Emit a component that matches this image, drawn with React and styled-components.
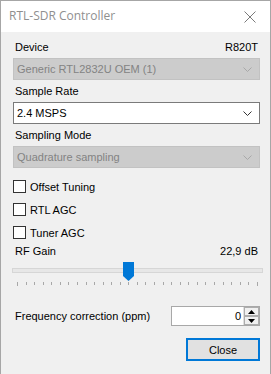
import styled, { createGlobalStyle } from 'styled-components';

const GlobalStyle = createGlobalStyle`
  html, body {
    margin: 0;
    padding: 0;
    background: #f0f0f0;
  }
  body {
    font-family: "Liberation Sans", Arial, sans-serif;
    font-size: 11px;
    color: #000;
  }
`;

const TICKS = 29;
const GAIN_INDEX = 13;

const Chevron = ({ color }) => (
  <svg width="9" height="5" viewBox="0 0 9 5">
    <path d="M0.5 0.5 L4.5 4.5 L8.5 0.5" fill="none" stroke={color} strokeWidth="1" />
  </svg>
);

const App = () => {
  return (
    <>
      <GlobalStyle />
      <Window>
        <TitleBar>
          <Title>RTL-SDR Controller</Title>
          <CloseX width="12" height="12" viewBox="0 0 12 12">
            <path d="M0.5 0.5 L11.5 11.5 M11.5 0.5 L0.5 11.5" stroke="#7a7a7a" strokeWidth="1" />
          </CloseX>
        </TitleBar>
        <Body>
          <Row>
            <span>Device</span>
            <span>R820T</span>
          </Row>
          <Combo disabled>
            <span>Generic RTL2832U OEM (1)</span>
            <Chevron color="#a8a8a8" />
          </Combo>
          <Row $top={5}>
            <span>Sample Rate</span>
          </Row>
          <Combo>
            <span>2.4 MSPS</span>
            <Chevron color="#333" />
          </Combo>
          <Row $top={5}>
            <span>Sampling Mode</span>
          </Row>
          <Combo disabled>
            <span>Quadrature sampling</span>
            <Chevron color="#a8a8a8" />
          </Combo>
          <Checks>
            <Check>
              <Box />
              <span>Offset Tuning</span>
            </Check>
            <Check>
              <Box />
              <span>RTL AGC</span>
            </Check>
            <Check>
              <Box />
              <span>Tuner AGC</span>
            </Check>
          </Checks>
          <Row $top={6}>
            <span>RF Gain</span>
            <span>22,9 dB</span>
          </Row>
          <Slider>
            <Track />
            <Thumb
              width="11"
              height="19"
              viewBox="0 0 11 19"
              style={{ left: `${Math.round(4 + (GAIN_INDEX / (TICKS - 1)) * 240 - 5)}px` }}
            >
              <path d="M0 0 H11 V14 L5.5 19 L0 14 Z" fill="#0078d7" />
            </Thumb>
            <Ticks>
              {Array.from({ length: TICKS }).map((_, i) => (
                <Tick key={i} $long={i === 0 || i === TICKS - 1} />
              ))}
            </Ticks>
          </Slider>
          <FreqRow>
            <span>Frequency correction (ppm)</span>
            <Spin>
              <SpinValue>0</SpinValue>
              <SpinButtons>
                <SpinBtn>
                  <svg width="7" height="4" viewBox="0 0 7 4">
                    <path d="M0 4 L3.5 0 L7 4 Z" fill="#000" />
                  </svg>
                </SpinBtn>
                <SpinBtn>
                  <svg width="7" height="4" viewBox="0 0 7 4">
                    <path d="M0 0 L3.5 4 L7 0 Z" fill="#000" />
                  </svg>
                </SpinBtn>
              </SpinButtons>
            </Spin>
          </FreqRow>
          <Footer>
            <Button>Close</Button>
          </Footer>
        </Body>
      </Window>
    </>
  );
};

const Window = styled.div`
  width: 271px;
  height: 374px;
  box-sizing: border-box;
  border: 1px solid #a6a6a6;
  border-bottom: none;
  background: #f0f0f0;
  display: flex;
  flex-direction: column;
`;

const TitleBar = styled.div`
  height: 31px;
  background: #fff;
  display: flex;
  align-items: center;
  justify-content: space-between;
  padding: 0 14px 0 8px;
  flex-shrink: 0;
`;

const Title = styled.span`
  font-family: "Open Sans", "Liberation Sans", sans-serif;
  font-size: 12px;
  color: #8f8f8f;
  margin-top: -2px;
`;

const CloseX = styled.svg`
  display: block;
`;

const Body = styled.div`
  display: flex;
  flex-direction: column;
  padding: 9px 10px 0 12px;
`;

const Row = styled.div`
  display: flex;
  justify-content: space-between;
  height: 13px;
  line-height: 13px;
  padding: 0 2px;
  margin-top: ${(p) => p.$top || 0}px;
  margin-bottom: 4px;
`;

const Combo = styled.div`
  height: 22px;
  box-sizing: border-box;
  display: flex;
  align-items: center;
  justify-content: space-between;
  padding: 0 7px 0 3px;
  border: 1px solid ${(p) => (p.disabled ? '#c2c2c2' : '#7a7a7a')};
  background: ${(p) => (p.disabled ? '#cccccc' : '#fff')};
  color: ${(p) => (p.disabled ? '#838383' : '#000')};
  svg {
    display: block;
  }
`;

const Checks = styled.div`
  display: flex;
  flex-direction: column;
  gap: 10px;
  margin-top: 12px;
`;

const Check = styled.label`
  display: flex;
  align-items: center;
  gap: 4px;
  height: 13px;
`;

const Box = styled.span`
  width: 13px;
  height: 13px;
  box-sizing: border-box;
  border: 1px solid #333;
  background: #fff;
`;

const Slider = styled.div`
  position: relative;
  height: 26px;
`;

const Track = styled.div`
  position: absolute;
  top: 6px;
  left: -1px;
  right: -3px;
  height: 5px;
  box-sizing: border-box;
  background: #e7e7e7;
  border: 1px solid #d6d6d6;
`;

const Thumb = styled.svg`
  position: absolute;
  top: 0;
  display: block;
`;

const Ticks = styled.div`
  position: absolute;
  top: 20px;
  left: 4px;
  width: 241px;
  display: flex;
  justify-content: space-between;
  align-items: flex-start;
`;

const Tick = styled.span`
  width: 1px;
  height: ${(p) => (p.$long ? 4 : 3)}px;
  background: #a8a8a8;
`;

const FreqRow = styled.div`
  display: flex;
  align-items: center;
  justify-content: space-between;
  margin-top: 18px;
  padding-left: 2px;
`;

const Spin = styled.div`
  width: 89px;
  height: 20px;
  box-sizing: border-box;
  border: 1px solid #a8a8a8;
  background: #fff;
  display: flex;
  align-items: stretch;
`;

const SpinValue = styled.span`
  flex: 1;
  text-align: right;
  line-height: 18px;
  padding-right: 2px;
`;

const SpinButtons = styled.div`
  width: 15px;
  display: flex;
  flex-direction: column;
  border-left: 1px solid #e0e0e0;
`;

const SpinBtn = styled.div`
  flex: 1;
  display: flex;
  align-items: center;
  justify-content: center;
  background: #f0f0f0;
  border: 1px solid #adadad;
  svg {
    display: block;
  }
`;

const Footer = styled.div`
  display: flex;
  justify-content: flex-end;
  margin-top: 12px;
`;

const Button = styled.button`
  width: 74px;
  height: 23px;
  box-sizing: border-box;
  border: 2px solid #0078d7;
  background: #e1e1e1;
  font-family: "Liberation Sans", Arial, sans-serif;
  font-size: 11px;
  color: #000;
  padding: 0;
`;

export default App;
